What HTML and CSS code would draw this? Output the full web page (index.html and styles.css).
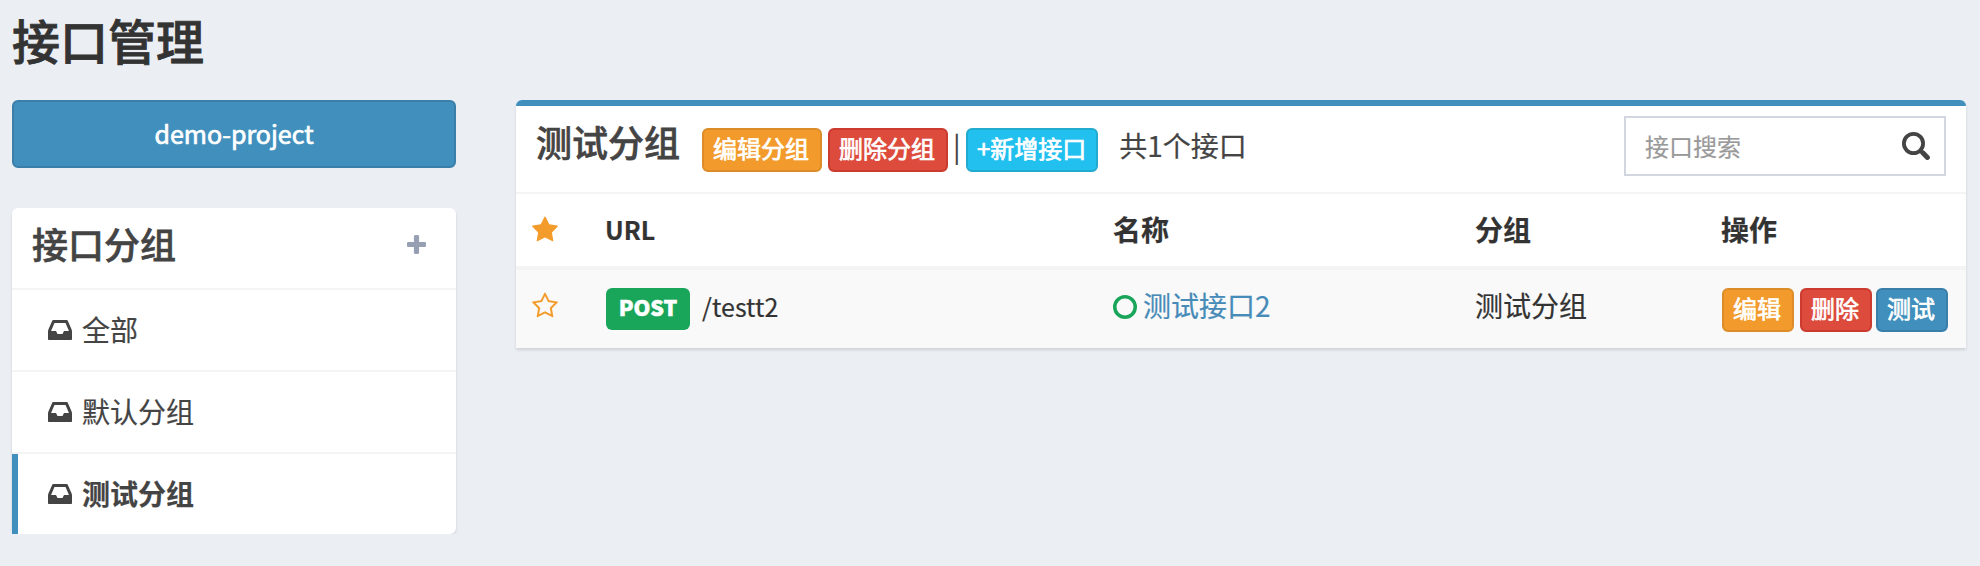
FILE: index.html
```html
<!DOCTYPE html>
<html lang="zh-CN">
<head>
<meta charset="utf-8">
<title>接口管理</title>
<link rel="stylesheet" href="styles.css">
</head>
<body>
<svg class="sprite" aria-hidden="true">
  <symbol id="inbox" viewBox="128 256 1536 1280"><path d="M1151 960h316q-1-3-2.5-8t-2.5-8l-212-496h-708l-212 496q-1 2-2.5 8t-2.5 8h316l95 192h320zm513 30v482q0 26-19 45t-45 19h-1408q-26 0-45-19t-19-45v-482q0-62 25-123l238-552q10-25 36.5-42t52.5-17h832q26 0 52.5 17t36.5 42l238 552q25 61 25 123z"/></symbol>
</svg>
<h1 class="page-title">接口管理</h1>
<div class="layout">
  <aside class="sidebar">
    <button class="btn project-btn">demo-project</button>
    <section class="box">
      <header class="group-header">
        <h3 class="box-title">接口分组</h3>
        <svg class="plus" viewBox="192 128 1408 1408"><path d="M1600 736v192q0 40-28 68t-68 28h-416v416q0 40-28 68t-68 28h-192q-40 0-68-28t-28-68v-416h-416q-40 0-68-28t-28-68v-192q0-40 28-68t68-28h416v-416q0-40 28-68t68-28h192q40 0 68 28t28 68v416h416q40 0 68 28t28 68z"/></svg>
      </header>
      <ul class="groups">
        <li class="group"><svg class="inbox"><use href="#inbox"/></svg><span>全部</span></li>
        <li class="group"><svg class="inbox"><use href="#inbox"/></svg><span>默认分组</span></li>
        <li class="group active"><svg class="inbox"><use href="#inbox"/></svg><span>测试分组</span></li>
      </ul>
    </section>
  </aside>
  <main class="box panel">
    <header class="panel-header">
      <h3 class="box-title">测试分组</h3>
      <div class="tools">
        <button class="btn btn-sm warning">编辑分组</button>
        <button class="btn btn-sm danger">删除分组</button>
        <span class="pipe">|</span>
        <button class="btn btn-sm info">+新增接口</button>
      </div>
      <span class="total">共1个接口</span>
      <div class="search">
        <span class="placeholder">接口搜索</span>
        <svg class="search-icon" viewBox="0 0 28 28"><circle cx="11.5" cy="11.5" r="9.6"/><path class="neck" d="M18 18L22 22"/><path class="handle" d="M20.8 20.8L25.4 25.4"/></svg>
      </div>
    </header>
    <div class="row head">
      <div class="cell"><svg class="star" viewBox="0 0 1792 1792"><path d="M1728 647q0 22-26 48l-363 354 86 500q1 7 1 20 0 21-10.5 35.5t-30.5 14.5q-19 0-40-12l-449-236-449 236q-22 12-40 12-21 0-31.5-14.5t-10.5-35.5q0-6 2-20l86-500-364-354q-25-27-25-48 0-37 56-46l502-73 225-455q19-41 49-41t49 41l225 455 502 73q56 9 56 46z"/></svg></div>
      <div class="cell"><span class="latin">URL</span></div>
      <div class="cell">名称</div>
      <div class="cell">分组</div>
      <div class="cell">操作</div>
    </div>
    <div class="row item">
      <div class="cell"><svg class="star" viewBox="0 0 1792 1792"><path d="M1201 1004l306-297-422-62-189-382-189 382-422 62 306 297-73 421 378-199 377 199zm527-357q0 22-26 48l-363 354 86 500q1 7 1 20 0 50-41 50-19 0-40-12l-449-236-449 236q-22 12-40 12-21 0-31.5-14.5t-10.5-35.5q0-6 2-20l86-500-364-354q-25-27-25-48 0-37 56-46l502-73 225-455q19-41 49-41t49 41l225 455 502 73q56 9 56 46z"/></svg></div>
      <div class="cell url"><span class="method">POST</span><span class="latin">/testt2</span></div>
      <div class="cell link"><svg class="ring" viewBox="0 0 24 24"><circle cx="12" cy="12" r="10.25"/></svg><span>测试接口2</span></div>
      <div class="cell">测试分组</div>
      <div class="cell actions">
        <button class="btn btn-sm warning">编辑</button>
        <button class="btn btn-sm danger">删除</button>
        <button class="btn btn-sm primary">测试</button>
      </div>
    </div>
  </main>
</div>
</body>
</html>
```
FILE: styles.css
```css
* { box-sizing: border-box; }

body {
  margin: 0;
  padding: 8px 14px 0 12px;
  background: #ebeff4;
  color: #333;
  font: 28px/40px "Noto Sans CJK SC", sans-serif;
  -webkit-text-stroke: 0.2px currentColor;
}

.sprite { display: none; }

.page-title {
  margin: 0 0 20px;
  height: 72px;
  font-size: 48px;
  line-height: 63px;
  font-weight: 500;
  -webkit-text-stroke: 0.8px currentColor;
}

.layout {
  display: grid;
  grid-template-columns: 444px 1450px;
  column-gap: 60px;
  align-items: start;
}

.sidebar {
  display: flex;
  flex-direction: column;
  gap: 40px;
}

.btn {
  border: 2px solid #3a7fa9;
  border-radius: 6px;
  background: #408fbc;
  color: #fff;
  font-family: inherit;
  padding: 0;
  -webkit-text-stroke: 0.7px currentColor;
}

.project-btn {
  height: 68px;
  padding-bottom: 2px;
  font-size: 25px;
  line-height: 62px;
}

.btn-sm {
  height: 44px;
  padding: 0 11px 4px 9px;
  font-size: 24px;
  line-height: 36px;
}

.warning { background: #f29b2c; border-color: #dc8c28; }
.danger { background: #dc4b3c; border-color: #cb3b2f; }
.info { background: #21c0ef; border-color: #22aacf; }

.box {
  background: #fff;
  border-radius: 6px;
  box-shadow: 0 2px 3px rgba(0, 0, 0, .12);
  color: #444;
}

.box-title {
  margin: 0;
  font-size: 36px;
  line-height: 40px;
  font-weight: 500;
  -webkit-text-stroke: 0.6px currentColor;
}

.group-header {
  display: flex;
  justify-content: space-between;
  align-items: flex-start;
  height: 82px;
  padding: 15px 30px 0 20px;
  border-bottom: 2px solid #f4f4f4;
}

.plus {
  width: 19px;
  height: 19px;
  margin-top: 12px;
  fill: #97a0b3;
}

.groups {
  margin: 0;
  padding: 0;
  list-style: none;
}

.group {
  display: flex;
  align-items: center;
  gap: 10px;
  height: 82px;
  padding: 0 0 2px 36px;
  border-bottom: 2px solid #f4f4f4;
}

.group.active {
  height: 80px;
  padding: 0 0 2px 30px;
  border-left: 6px solid #408fbc;
  border-bottom: 0;
  font-weight: 700;
}

.inbox { width: 24px; height: 20px; margin-top: 1px; fill: #444; }

.panel { border-top: 6px solid #408fbc; border-radius: 6px 6px 0 0; }

.panel-header {
  display: flex;
  align-items: flex-start;
  height: 88px;
  padding: 10px 20px 0;
  border-bottom: 2px solid #f4f4f4;
}

.panel-header .box-title { width: 166px; margin-top: 5px; }

.tools {
  display: flex;
  gap: 6px;
  margin-top: 12px;
}

.pipe { width: 6px; margin: -3px 0 0 -1px; padding-right: 7px; }

.tools .info { padding: 0 10px 4px 9px; }

.total { margin: 9px 0 0 21px; }

.search {
  display: flex;
  justify-content: space-between;
  width: 322px;
  height: 60px;
  margin-left: auto;
  padding: 8px 14px 0 19px;
  border: 2px solid #d2d6de;
  font-size: 24px;
}

.placeholder { color: #999; }

.search-icon {
  width: 28px;
  height: 28px;
  margin-top: 6px;
  fill: none;
  stroke: #444;
  stroke-width: 3.8;
}

.search-icon .handle { stroke-width: 5; stroke-linecap: round; }

.row {
  display: grid;
  grid-template-columns: 74px 508px 362px 246px 260px;
  color: #333;
}

.cell {
  display: flex;
  align-items: center;
  padding: 0 0 2px 15px;
}

.latin { font-size: 25px; }

.head {
  height: 76px;
  border-bottom: 4px solid #f4f4f4;
  font-weight: 700;
}

.item { height: 78px; background: #f9f9f9; }
.item .cell { padding-bottom: 8px; }
.item .url,
.item .actions { padding: 0 0 0 16px; }
.item .latin { margin-top: -7px; }

.star { width: 28px; height: 28px; margin: 2px 0 0; fill: #f39c2c; }

.method {
  width: 84px;
  height: 42px;
  margin: 0 12px 0 0;
  border-radius: 6px;
  background: #1aa65a;
  color: #fff;
  font-size: 21.5px;
  line-height: 38px;
  font-weight: 900;
  text-align: center;
  -webkit-text-stroke: 0.5px currentColor;
}

.link { gap: 6px; color: #478bb8; }

.ring { width: 24px; height: 24px; margin: 3px 0 0; fill: none; stroke: #1aa65a; stroke-width: 3.5; }

.actions { gap: 6px; }
.actions .btn { margin-top: 2px; }
.actions .primary { margin-left: -2px; }
```
